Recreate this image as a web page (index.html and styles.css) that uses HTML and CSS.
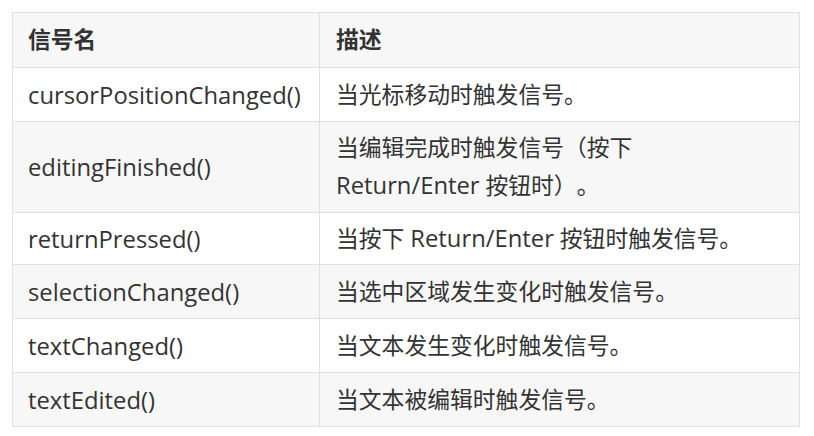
FILE: index.html
```html
<!DOCTYPE html>
<html lang="zh-CN">
<head>
<meta charset="utf-8">
<link rel="stylesheet" href="styles.css">
</head>
<body>
<table class="sig-table">
  <colgroup><col class="c1"><col class="c2"></colgroup>
  <thead>
    <tr><th>信号名</th><th>描述</th></tr>
  </thead>
  <tbody>
    <tr><td class="name">cursorPositionChanged()</td><td>当光标移动时触发信号。</td></tr>
    <tr class="tall"><td class="name">editingFinished()</td><td>当编辑完成时触发信号（按下<br><span class="lat">Return/Enter</span> 按钮时）。</td></tr>
    <tr class="short"><td class="name">returnPressed()</td><td>当按下 <span class="lat">Return/Enter</span> 按钮时触发信号。</td></tr>
    <tr><td class="name">selectionChanged()</td><td>当选中区域发生变化时触发信号。</td></tr>
    <tr><td class="name">textChanged()</td><td>当文本发生变化时触发信号。</td></tr>
    <tr><td class="name">textEdited()</td><td>当文本被编辑时触发信号。</td></tr>
  </tbody>
</table>
</body>
</html>
```

FILE: styles.css
```css
html, body {
  margin: 0;
  padding: 0;
  background: #ffffff;
}
body {
  padding: 12px 0 0 12px;
  font-family: "Open Sans", "Noto Sans CJK SC", sans-serif;
  font-size: 22.8px;
  color: #333333;
}
.sig-table {
  border-collapse: collapse;
  width: 787px;
  table-layout: fixed;
}
.sig-table .c1 { width: 307px; }
.sig-table .c2 { width: 480px; }
.sig-table th,
.sig-table td {
  border: 1px solid #dfe2e5;
  padding: 7.5px 16px 7.5px 15px;
  line-height: 38px;
  text-align: left;
  vertical-align: middle;
  text-spacing-trim: space-all;
}
.sig-table th {
  font-weight: 700;
  background: #f7f7f7;
  padding-top: 8px;
  padding-bottom: 8px;
}
.sig-table tbody tr:nth-child(odd) td { background: #ffffff; }
.sig-table tbody tr:nth-child(even) td { background: #f7f7f7; }
.sig-table td + td, .sig-table th + th { padding-left: 16px; }
.sig-table .name { font-size: 23.8px; }
.sig-table .lat { font-size: 23.8px; line-height: 20px; }
.sig-table .tall td { padding-top: 7px; padding-bottom: 7px; }
.sig-table .short td { padding-top: 6.5px; padding-bottom: 6.5px; }
```
